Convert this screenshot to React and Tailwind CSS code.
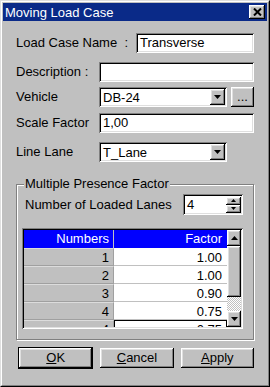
const sunken =
  "bg-white shadow-[inset_1px_1px_0_#808080,inset_-1px_-1px_0_#ffffff,inset_2px_2px_0_#000000,inset_-2px_-2px_0_#dfdfdf]";
const raised =
  "bg-[#c0c0c0] shadow-[inset_-1px_-1px_0_#000000,inset_1px_1px_0_#ffffff,inset_-2px_-2px_0_#808080,inset_2px_2px_0_#dfdfdf]";

function Arrow({ up }) {
  return (
    <svg width="7" height="4" viewBox="0 0 7 4">
      <path d={up ? "M3.5 0L7 4H0Z" : "M0 0H7L3.5 4Z"} fill="#000" />
    </svg>
  );
}

function Combo({ value }) {
  return (
    <div className={`${sunken} w-[128px] h-[20px] flex items-center pl-[4px] pr-[2px]`}>
      <span className="flex-1 leading-none">{value}</span>
      <div className={`${raised} w-[15px] h-[16px] flex items-center justify-center`}>
        <Arrow />
      </div>
    </div>
  );
}

const rows = [
  ["1", "1.00"],
  ["2", "1.00"],
  ["3", "0.90"],
  ["4", "0.75"],
];

export default function App() {
  return (
    <div
      className="w-[270px] h-[387px] bg-[#c0c0c0] border border-t-[#dfdfdf] border-l-[#dfdfdf] border-r-black border-b-black text-[13px] text-black overflow-hidden"
      style={{ fontFamily: '"Liberation Sans", Arial, sans-serif' }}
    >
      <div className="h-full border border-t-white border-l-white border-r-[#808080] border-b-[#808080] p-[1px] flex flex-col">
        {/* title bar */}
        <div className="h-[18px] bg-[#0a2a88] flex items-center pl-[2px] pr-[2px]">
          <span className="flex-1 text-white leading-none">Moving Load Case</span>
          <div className={`${raised} w-[16px] h-[14px] flex items-center justify-center`}>
            <svg width="9" height="8" viewBox="0 0 9 8">
              <path d="M1 0.5L8 7.5M8 0.5L1 7.5" stroke="#000" strokeWidth="2" />
            </svg>
          </div>
        </div>

        <div className="px-[13px] flex flex-col">
          <div className="mt-[12px] h-[20px] flex items-center">
            <span className="w-[120px]">Load Case Name&nbsp;&nbsp;:</span>
            <div className={`${sunken} flex-1 h-[20px] flex items-center pl-[4px]`}>Transverse</div>
          </div>

          <div className="mt-[9px] h-[20px] flex items-center">
            <span className="w-[83px]">Description :</span>
            <div className={`${sunken} flex-1 h-[20px]`} />
          </div>

          <div className="mt-[5px] h-[20px] flex items-center">
            <span className="w-[83px]">Vehicle</span>
            <Combo value="DB-24" />
            <div className={`${raised} ml-[4px] w-[23px] h-[20px] flex items-center justify-center leading-none pb-[2px]`}>
              ...
            </div>
          </div>

          <div className="mt-[6px] h-[20px] flex items-center">
            <span className="w-[83px]">Scale Factor</span>
            <div className={`${sunken} flex-1 h-[20px] flex items-center pl-[4px]`}>1,00</div>
          </div>

          <div className="mt-[9px] h-[20px] flex items-center">
            <span className="w-[83px]">Line Lane</span>
            <Combo value="T_Lane" />
          </div>

          {/* group box */}
          <div className="relative mt-[22px] h-[156px] border border-[#808080] shadow-[inset_1px_1px_0_#ffffff,1px_1px_0_#ffffff] pl-[8px] pr-[10px]">
            <span className="absolute -top-[9px] left-[7px] bg-[#c0c0c0] px-[1px] leading-[16px]">
              Multiple Presence Factor
            </span>
            <div className="mt-[9px] h-[21px] flex items-center">
              <span className="flex-1">Number of Loaded Lanes</span>
              <div className={`${sunken} w-[60px] h-[21px] flex items-center pl-[4px] pr-[2px]`}>
                <span className="flex-1">4</span>
                <div className="flex flex-col">
                  <div className={`${raised} w-[15px] h-[8px] flex items-center justify-center`}>
                    <svg width="5" height="3" viewBox="0 0 5 3"><path d="M2.5 0L5 3H0Z" /></svg>
                  </div>
                  <div className={`${raised} w-[15px] h-[8px] flex items-center justify-center`}>
                    <svg width="5" height="3" viewBox="0 0 5 3"><path d="M0 0H5L2.5 3Z" /></svg>
                  </div>
                </div>
              </div>
            </div>

            {/* grid */}
            <div className="mt-[13px] -ml-[3px] w-[221px] h-[101px] p-[2px] bg-[#c0c0c0] shadow-[inset_1px_1px_0_#808080,inset_-1px_-1px_0_#ffffff,inset_2px_2px_0_#000000,inset_-2px_-2px_0_#dfdfdf] flex">
              <div className="flex-1 overflow-hidden flex flex-col">
                <div className="h-[18px] shrink-0 flex bg-[#0000ff] text-white">
                  <div className="w-[90px] text-right pr-[4px] leading-[18px] border-r border-[#c0c0c0]">Numbers</div>
                  <div className="flex-1 text-right pr-[5px] leading-[18px]">Factor</div>
                </div>
                {rows.map(([n, f]) => (
                  <div key={n} className="h-[18px] shrink-0 flex">
                    <div className="w-[90px] text-right pr-[4px] leading-[17px] border-r border-b border-[#a0a0a0] border-t border-t-[#dcdcdc]">
                      {n}
                    </div>
                    <div className="flex-1 bg-white text-right pr-[5px] leading-[17px] border-b border-[#c0c0c0] pt-[1px]">
                      {f}
                    </div>
                  </div>
                ))}
                <div className="h-[18px] shrink-0 flex">
                  <div className="w-[90px] text-right pr-[4px] leading-[17px] border-r border-[#a0a0a0] border-t border-t-[#dcdcdc]">
                    <span className="text-[10px] mr-[6px]">›</span>4
                  </div>
                  <div className="flex-1 bg-white text-right pr-[4px] leading-[17px] border border-black">0.75</div>
                </div>
              </div>

              {/* scrollbar */}
              <div className="w-[14px] flex flex-col">
                <div className={`${raised} h-[16px] flex items-center justify-center`}>
                  <Arrow up />
                </div>
                <div className={`${raised} h-[51px]`} />
                <div className="flex-1 bg-[repeating-conic-gradient(#ffffff_0_25%,#c0c0c0_0_50%)] bg-[length:2px_2px]" />
                <div className={`${raised} h-[16px] flex items-center justify-center`}>
                  <Arrow />
                </div>
              </div>
            </div>
          </div>

          {/* buttons */}
          <div className="mt-[8px] ml-[3px] flex">
            <div className={`${raised} w-[74px] h-[20px] flex items-center justify-center outline outline-1 outline-black`}>
              <span><u>O</u>K</span>
            </div>
            <div className={`${raised} ml-[8px] w-[74px] h-[20px] flex items-center justify-center`}>
              <span><u>C</u>ancel</span>
            </div>
            <div className={`${raised} ml-[7px] w-[74px] h-[20px] flex items-center justify-center`}>
              <span><u>A</u>pply</span>
            </div>
          </div>
        </div>
      </div>
    </div>
  );
}
